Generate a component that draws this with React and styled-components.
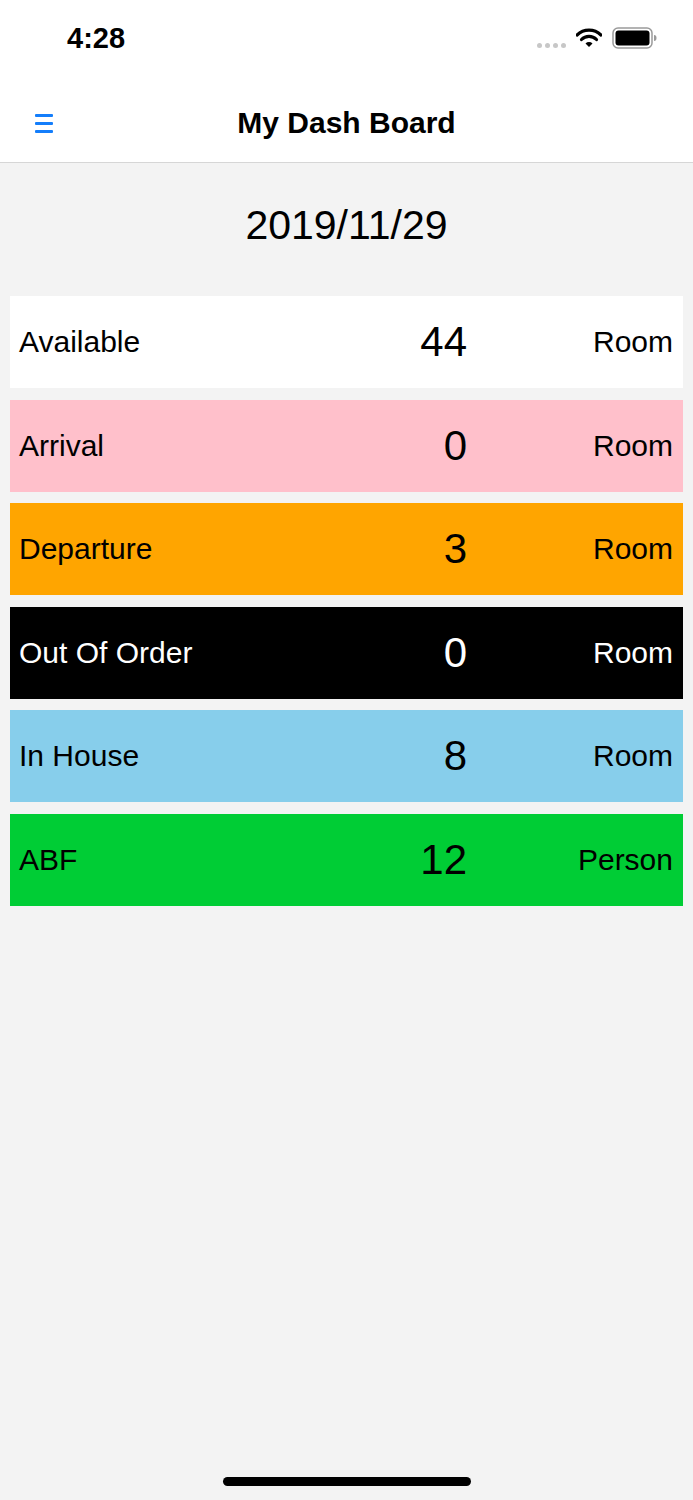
import React from 'react';
import styled, { createGlobalStyle } from 'styled-components';

const GlobalStyle = createGlobalStyle`
  html, body {
    margin: 0;
    padding: 0;
    background: #f3f3f3;
    font-family: "Liberation Sans", Arial, sans-serif;
  }
`;

const rows = [
  { label: 'Available', count: 44, unit: 'Room', bg: '#ffffff', fg: '#000000' },
  { label: 'Arrival', count: 0, unit: 'Room', bg: '#ffc0cb', fg: '#000000' },
  { label: 'Departure', count: 3, unit: 'Room', bg: '#ffa500', fg: '#000000' },
  { label: 'Out Of Order', count: 0, unit: 'Room', bg: '#000000', fg: '#ffffff' },
  { label: 'In House', count: 8, unit: 'Room', bg: '#87ceeb', fg: '#000000' },
  { label: 'ABF', count: 12, unit: 'Person', bg: '#00cd35', fg: '#000000' }
];

const Screen = styled.div`
  display: flex;
  flex-direction: column;
  min-height: 100vh;
  background: #f3f3f3;
`;

const Header = styled.header`
  background: #ffffff;
  border-bottom: 1px solid #d6d6d6;
`;

const StatusBar = styled.div`
  height: 76px;
  display: flex;
  align-items: center;
  justify-content: space-between;
  padding: 0 36px 0 67px;
`;

const Time = styled.span`
  font-size: 29px;
  font-weight: 700;
  color: #000;
`;

const StatusIcons = styled.div`
  display: flex;
  align-items: center;
  gap: 10px;
`;

const Dots = styled.div`
  display: flex;
  gap: 3px;
  margin-top: 14px;
`;

const Dot = styled.span`
  width: 5px;
  height: 5px;
  border-radius: 50%;
  background: #c7c7c7;
`;

const NavBar = styled.div`
  height: 86px;
  display: grid;
  grid-template-columns: 80px 1fr 80px;
  align-items: center;
  padding-top: 8px;
  box-sizing: border-box;
`;

const MenuButton = styled.button`
  border: 0;
  background: none;
  padding: 0 0 0 35px;
  display: flex;
  flex-direction: column;
  gap: 5px;
  cursor: pointer;
`;

const MenuLine = styled.span`
  display: block;
  width: 18px;
  height: 3px;
  border-radius: 1px;
  background: #147efb;
`;

const Title = styled.h1`
  margin: 0;
  text-align: center;
  font-size: 30px;
  font-weight: 700;
  color: #000;
`;

const DateLabel = styled.div`
  text-align: center;
  font-size: 41px;
  line-height: 44px;
  color: #000;
  padding: 40px 0 49px;
`;

const List = styled.div`
  display: flex;
  flex-direction: column;
  gap: 11.5px;
  padding: 0 10px;
`;

const Row = styled.div`
  height: 92px;
  display: grid;
  grid-template-columns: 1fr auto 206px;
  align-items: center;
  padding: 0 10px 0 9px;
  background: ${p => p.$bg};
  color: ${p => p.$fg};
`;

const Label = styled.span`
  font-size: 30px;
`;

const Count = styled.span`
  font-size: 42px;
  text-align: right;
`;

const Unit = styled.span`
  font-size: 30px;
  text-align: right;
`;

const Footer = styled.div`
  margin-top: auto;
  display: flex;
  justify-content: center;
  padding-bottom: 14px;
`;

const HomeIndicator = styled.div`
  width: 248px;
  height: 9px;
  border-radius: 5px;
  background: #000;
`;

const Wifi = () => (
  <svg width="26" height="20" viewBox="0 0 26 20">
    <path d="M1 7 A17 17 0 0 1 25 7" fill="none" stroke="#000" strokeWidth="3.2" strokeLinecap="round" />
    <path d="M5.5 11.5 A10.5 10.5 0 0 1 20.5 11.5" fill="none" stroke="#000" strokeWidth="3.2" strokeLinecap="round" />
    <path d="M9.5 15.5 L13 19 L16.5 15.5 A5 5 0 0 0 9.5 15.5 Z" fill="#000" />
  </svg>
);

const Battery = () => (
  <svg width="45" height="22" viewBox="0 0 45 22">
    <rect x="1" y="1" width="39" height="20" rx="5" fill="none" stroke="#9a9a9a" strokeWidth="1.5" />
    <rect x="3.5" y="3.5" width="34" height="15" rx="3" fill="#000" />
    <path d="M42 8 Q44.5 8 44.5 11 Q44.5 14 42 14 Z" fill="#9a9a9a" />
  </svg>
);

const App = () => {
  return (
    <Screen>
      <GlobalStyle />
      <Header>
        <StatusBar>
          <Time>4:28</Time>
          <StatusIcons>
            <Dots>
              <Dot />
              <Dot />
              <Dot />
              <Dot />
            </Dots>
            <Wifi />
            <Battery />
          </StatusIcons>
        </StatusBar>
        <NavBar>
          <MenuButton aria-label="menu">
            <MenuLine />
            <MenuLine />
            <MenuLine />
          </MenuButton>
          <Title>My Dash Board</Title>
          <span />
        </NavBar>
      </Header>
      <DateLabel>2019/11/29</DateLabel>
      <List>
        {rows.map(r => (
          <Row key={r.label} $bg={r.bg} $fg={r.fg}>
            <Label>{r.label}</Label>
            <Count>{r.count}</Count>
            <Unit>{r.unit}</Unit>
          </Row>
        ))}
      </List>
      <Footer>
        <HomeIndicator />
      </Footer>
    </Screen>
  );
};

export default App;
